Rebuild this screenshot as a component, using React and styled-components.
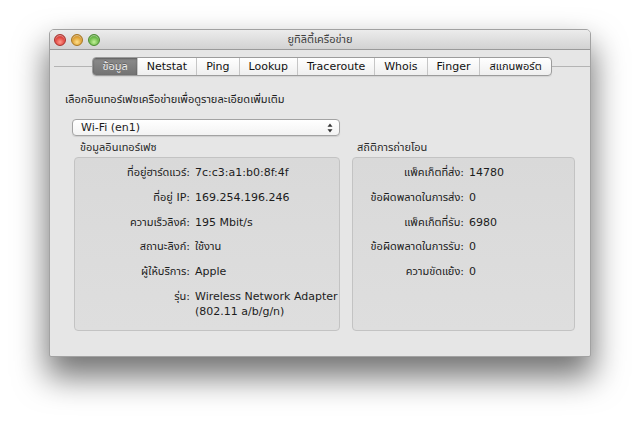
import React from "react";
import styled, { createGlobalStyle } from "styled-components";

const GlobalStyle = createGlobalStyle`
  body {
    margin: 0;
    background: #fff;
    font-family: "DejaVu Sans", "Noto Sans Thai", "Noto Sans", sans-serif;
    font-size: 11px;
    color: #1c1c1c;
  }
`;

const Stage = styled.div`
  padding: 29px 0 0 49px;
  height: 425px;
  box-sizing: border-box;
  overflow: hidden;
`;

const Window = styled.div`
  width: 542px;
  height: 328px;
  box-sizing: border-box;
  display: flex;
  flex-direction: column;
  background: #e6e6e6;
  border: 1px solid #a2a2a2;
  border-radius: 5px 5px 2px 2px;
  box-shadow: 0 18px 32px 2px rgba(0, 0, 0, 0.55);
  overflow: hidden;
`;

const TitleBar = styled.div`
  height: 20px;
  box-sizing: border-box;
  display: grid;
  grid-template-columns: 1fr auto 1fr;
  align-items: center;
  background: linear-gradient(#ececec, #d2d2d2);
  border-bottom: 1px solid #9a9a9a;
  color: #404040;
  font-size: 11px;
`;

const Lights = styled.div`
  display: flex;
  gap: 5px;
  padding-left: 4px;
`;

const Light = styled.span`
  width: 12px;
  height: 12px;
  border-radius: 50%;
  box-sizing: border-box;
  border: 1px solid ${(p) => p.$edge};
  background: radial-gradient(circle at 50% 70%, ${(p) => p.$glow} 0%, ${(p) => p.$color} 55%, ${(p) => p.$edge} 100%);
  box-shadow: inset 0 1px 1px rgba(255, 255, 255, 0.5);
`;

const Title = styled.div`
  text-align: center;
`;

const Content = styled.div`
  padding: 0 15px;
  display: flex;
  flex-direction: column;
`;

const TabRow = styled.div`
  display: flex;
  align-items: center;
  margin: 7px -15px 0;
  padding-left: 4px;
`;

const Line = styled.div`
  flex: 1;
  height: 1px;
  background: #b4b4b4;
`;

const Tabs = styled.div`
  display: flex;
  height: 19px;
  box-sizing: border-box;
  border: 1px solid #9c9c9c;
  border-radius: 4px;
  overflow: hidden;
  background: linear-gradient(#ffffff, #efefef);
  box-shadow: 0 1px 1px rgba(0, 0, 0, 0.08);
`;

const Tab = styled.div`
  display: flex;
  align-items: center;
  padding: 0 9px;
  font-size: 11px;
  color: ${(p) => (p.$active ? "#ececec" : "#111")};
  background: ${(p) => (p.$active ? "linear-gradient(#8c8c8c, #737373)" : "transparent")};
  box-shadow: ${(p) => (p.$active ? "inset 0 1px 2px rgba(0,0,0,0.35)" : "none")};
  text-shadow: ${(p) => (p.$active ? "0 -1px 0 rgba(0,0,0,0.3)" : "none")};
  & + & {
    border-left: 1px solid #c6c6c6;
  }
`;

const Heading = styled.div`
  margin-top: 16px;
  line-height: 15px;
`;

const Select = styled.div`
  margin: 12px 0 0 7px;
  width: 268px;
  height: 17px;
  box-sizing: border-box;
  display: flex;
  align-items: center;
  justify-content: space-between;
  padding: 0 6px 0 8px;
  border: 1px solid #a3a3a3;
  border-radius: 4px;
  background: linear-gradient(#ffffff, #f3f3f3);
  box-shadow: 0 1px 1px rgba(0, 0, 0, 0.1);
`;

const Groups = styled.div`
  margin: 5px 0 0 9px;
  display: grid;
  grid-template-columns: 266px 223px;
  column-gap: 12px;
`;

const Group = styled.div`
  display: flex;
  flex-direction: column;
`;

const GroupLabel = styled.div`
  line-height: 14px;
  padding-left: ${(p) => p.$indent}px;
  color: #2a2a2a;
`;

const Panel = styled.div`
  margin-top: 2px;
  height: 174px;
  box-sizing: border-box;
  padding-top: 7px;
  border: 1px solid #c3c3c3;
  border-radius: 4px;
  background: linear-gradient(#d9d9d9, #dedede);
  display: grid;
  grid-template-columns: ${(p) => p.$labelWidth}px 1fr;
  column-gap: 5px;
  row-gap: 9.8px;
  align-content: start;
  line-height: 15px;
`;

const Label = styled.div`
  display: flex;
  justify-content: flex-end;
  white-space: nowrap;
`;

const Value = styled.div`
  white-space: nowrap;
`;

const Arrows = () => (
  <svg width="6" height="10" viewBox="0 0 6 10">
    <path d="M3 0.5 L5.5 3.8 H0.5 Z" fill="#333" />
    <path d="M3 9.5 L5.5 6.2 H0.5 Z" fill="#333" />
  </svg>
);

const tabs = ["ข้อมูล", "Netstat", "Ping", "Lookup", "Traceroute", "Whois", "Finger", "สแกนพอร์ต"];

const info = [
  ["ที่อยู่ฮาร์ดแวร์:", "7c:c3:a1:b0:8f:4f"],
  ["ที่อยู่ IP:", "169.254.196.246"],
  ["ความเร็วลิงค์:", "195 Mbit/s"],
  ["สถานะลิงก์:", "ใช้งาน"],
  ["ผู้ให้บริการ:", "Apple"],
  ["รุ่น:", <>Wireless Network Adapter<br />(802.11 a/b/g/n)</>],
];

const stats = [
  ["แพ็คเก็ตที่ส่ง:", "14780"],
  ["ข้อผิดพลาดในการส่ง:", "0"],
  ["แพ็คเก็ตที่รับ:", "6980"],
  ["ข้อผิดพลาดในการรับ:", "0"],
  ["ความขัดแย้ง:", "0"],
];

export default function App() {
  return (
    <>
      <GlobalStyle />
      <Stage>
        <Window>
          <TitleBar>
            <Lights>
              <Light $color="#e0443e" $edge="#a8312c" $glow="#ff9a8c" />
              <Light $color="#dea034" $edge="#a7751f" $glow="#ffe08a" />
              <Light $color="#6ab947" $edge="#4a8a30" $glow="#c4f29a" />
            </Lights>
            <Title>ยูทิลิตี้เครือข่าย</Title>
            <div />
          </TitleBar>
          <Content>
            <TabRow>
              <Line />
              <Tabs>
                {tabs.map((t, i) => (
                  <Tab key={t} $active={i === 0}>{t}</Tab>
                ))}
              </Tabs>
              <Line />
            </TabRow>
            <Heading>เลือกอินเทอร์เฟซเครือข่ายเพื่อดูรายละเอียดเพิ่มเติม</Heading>
            <Select>
              <span>Wi-Fi (en1)</span>
              <Arrows />
            </Select>
            <Groups>
              <Group>
                <GroupLabel $indent={6}>ข้อมูลอินเทอร์เฟซ</GroupLabel>
                <Panel $labelWidth={115}>
                  {info.map(([k, v]) => (
                    <React.Fragment key={k}>
                      <Label>{k}</Label>
                      <Value>{v}</Value>
                    </React.Fragment>
                  ))}
                </Panel>
              </Group>
              <Group>
                <GroupLabel $indent={5}>สถิติการถ่ายโอน</GroupLabel>
                <Panel $labelWidth={111}>
                  {stats.map(([k, v]) => (
                    <React.Fragment key={k}>
                      <Label>{k}</Label>
                      <Value>{v}</Value>
                    </React.Fragment>
                  ))}
                </Panel>
              </Group>
            </Groups>
          </Content>
        </Window>
      </Stage>
    </>
  );
}
